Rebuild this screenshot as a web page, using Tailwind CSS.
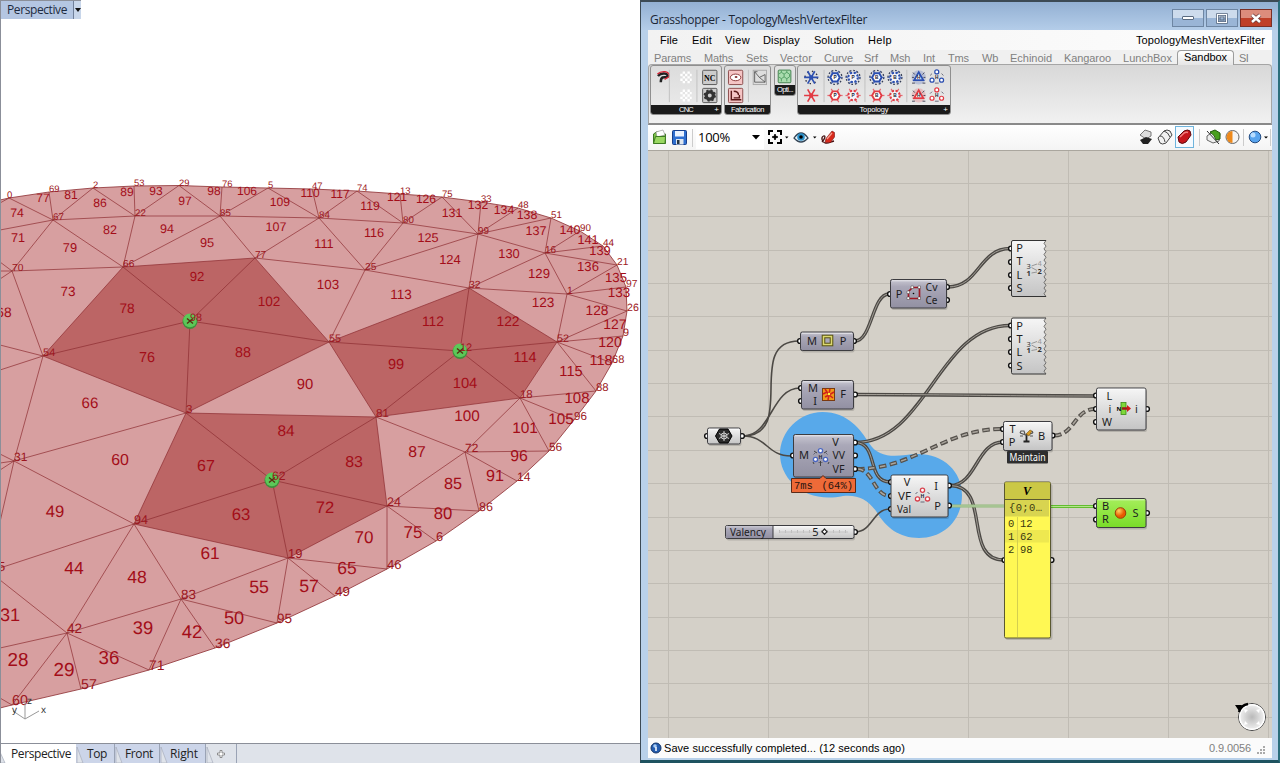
<!DOCTYPE html>
<html lang="en">
<head>
<meta charset="utf-8">
<title>Grasshopper - TopologyMeshVertexFilter</title>
<script src="https://cdn.jsdelivr.net/npm/@tailwindcss/browser@4"></script>
</head>
<body class="flex h-[763px] w-[1280px] overflow-hidden bg-white font-['Open_Sans','Noto_Sans',sans-serif] text-black">

<!-- Rhino viewport -->
<main class="relative flex h-[763px] w-[640px] shrink-0 flex-col overflow-hidden border-l border-[#8b8f99] bg-white">
  <svg id="mesh" class="absolute -left-px top-0 font-['Liberation_Sans',sans-serif]" text-rendering="geometricPrecision" width="640" height="744" viewBox="0 0 640 744"></svg>
  <div class="relative flex h-[19px] w-[80px] border-t border-[#8b8f99] bg-[#b4c6e2] text-[12px] leading-[18px] text-[#1c2a40]">
    <span class="w-[72px] pl-1.5"><span data-w="60">Perspective</span></span>
    <span class="flex w-2 items-center justify-center border-l border-[#70809a] bg-[#c8d6ea]"><svg width="6" height="4"><path d="M0 0h6L3 4z" fill="#111"/></svg></span>
  </div>
  <nav class="mt-auto flex h-[20px] border-t border-[#8b8f99] bg-[#dfe3ea] text-[12px] leading-[20px] text-[#222]">
    <span class="w-[75px] bg-white pl-[10px]"><span data-w="60">Perspective</span></span>
    <span class="w-[39px] border-r border-[#9aa3b5] bg-[#ccd5e9] pl-[11px]"><span data-w="20">Top</span></span>
    <span class="w-[45px] border-r border-[#9aa3b5] bg-[#ccd5e9] pl-[10px]"><span data-w="28">Front</span></span>
    <span class="w-[46px] border-r border-[#9aa3b5] bg-[#ccd5e9] pl-[10px]"><span data-w="28">Right</span></span>
    <span class="flex w-[31px] items-center justify-center border-r border-[#9aa3b5]"><svg width="8" height="8"><path d="M3 .5h2V3h2.500v2H5v2.500H3V5H.5V3H3z" fill="#fff" stroke="#777" stroke-width=".8"/></svg></span>
  </nav>
  <svg class="absolute -left-px top-[744px]" width="240" height="19" fill="#dfe3ea" stroke="#a8aebb" stroke-width=".7"><path d="M0 8L5 19H0zM77 3L83 19H77zM116 3L122 19H116zM161 3L167 19H161zM207 3L213 19H207z"/></svg>
</main>

<!-- Grasshopper window -->
<section class="flex h-[763px] w-[640px] shrink-0 flex-col border-2 border-b-[3px] border-l border-[#3c4a55] bg-[#b9d1ea] border-b-[#1e5360] border-r-[#2b6e7c]">
  <header class="flex h-[28px] items-start bg-linear-to-b from-[#93b0d3] to-[#b4cde9] pl-[9px]">
    <h1 class="mt-[9px] flex-1 text-[12px] leading-[17px] text-[#1b2636]"><span data-w="217">Grasshopper - TopologyMeshVertexFilter</span></h1>
    <div class="mr-[6px] mt-[7px] flex gap-[2px]">
      <span class="flex h-[18px] w-[32px] items-center justify-center border border-[#6e86a3] bg-linear-to-b from-[#cddbec] from-50% to-[#9ab5d6] to-50%"><svg width="12" height="5"><rect x=".5" y=".5" width="11" height="3" rx=".5" fill="#fff" stroke="#5b6b80"/></svg></span>
      <span class="flex h-[18px] w-[32px] items-center justify-center border border-[#6e86a3] bg-linear-to-b from-[#cddbec] from-50% to-[#9ab5d6] to-50%"><svg width="12" height="11" fill="none"><rect x="1.500" y="1.500" width="9" height="8" stroke="#5b6b80" stroke-width="2.500"/><rect x="1.500" y="1.500" width="9" height="8" stroke="#fff" stroke-width="1"/><rect x="4" y="4" width="4" height="3" stroke="#5b6b80"/></svg></span>
      <span class="flex h-[18px] w-[32px] items-center justify-center border border-[#7a2f26] bg-linear-to-b from-[#dc8c7c] from-50% to-[#bf3f28] to-50%"><svg width="12" height="11"><path d="M2 2l8 7M10 2l-8 7" stroke="#6a3a3a" stroke-width="4"/><path d="M2 2l8 7M10 2l-8 7" stroke="#fff" stroke-width="2.500"/></svg></span>
    </div>
  </header>

  <div class="ml-[7px] flex h-[728px] w-[624px] flex-col bg-[#f0f0f0] font-['Liberation_Sans',sans-serif]">
    <!-- menu -->
    <div class="flex h-[20px] bg-linear-to-r from-[#f2f2f2] to-[#fdfdfd] pl-[12px] text-[11px] leading-[21px]">
      <span class="w-[32px]"><span data-w="18">File</span></span>
      <span class="w-[33px]"><span data-w="20">Edit</span></span>
      <span class="w-[38px]"><span data-w="25">View</span></span>
      <span class="w-[51px]"><span data-w="37">Display</span></span>
      <span class="w-[54px]"><span data-w="40">Solution</span></span>
      <span><span data-w="24">Help</span></span>
      <span class="ml-auto mr-[7px]"><span data-w="129">TopologyMeshVertexFilter</span></span>
    </div>
    <!-- tabs -->
    <div class="flex h-[14px] pl-[6px] text-[11px] leading-[16px] text-[#808080]">
      <span class="w-[50px]"><span data-w="37">Params</span></span>
      <span class="w-[42px]"><span data-w="29">Maths</span></span>
      <span class="w-[34px]"><span data-w="22">Sets</span></span>
      <span class="w-[44px]"><span data-w="32">Vector</span></span>
      <span class="w-[40px]"><span data-w="29">Curve</span></span>
      <span class="w-[26px]"><span data-w="14">Srf</span></span>
      <span class="w-[33px]"><span data-w="20">Msh</span></span>
      <span class="w-[25px]"><span data-w="12">Int</span></span>
      <span class="w-[34px]"><span data-w="21">Tms</span></span>
      <span class="w-[28px]"><span data-w="16">Wb</span></span>
      <span class="w-[54px]"><span data-w="42">Echinoid</span></span>
      <span class="w-[59px]"><span data-w="47">Kangaroo</span></span>
      <span class="w-[54px]"><span data-w="49">LunchBox</span></span>
      <span class="z-10 h-[15px] w-[57px] rounded-t-[4px] border border-b-0 border-[#9c9c9c] bg-linear-to-b from-white to-[#e6e6e6] pl-[6px] leading-[13px] text-black"><span data-w="43">Sandbox</span></span>
      <span class="pl-[5px]"><span data-w="9">SI</span></span>
    </div>
    <!-- ribbon -->
    <div class="flex h-[61px] items-start gap-[3px] rounded-t-[4px] border border-b-2 border-[#a5a5a5] border-b-[#8a8a8a] bg-linear-to-b from-[#d8d8d8] to-[#f1f1f1] pl-px text-[7.500px]">
      <div class="flex h-[50px] w-[72px] flex-col overflow-hidden rounded-[3px] border border-[#8f8f8f] bg-linear-to-b from-[#dcdcdc] to-[#ececec]">
        <svg width="70" height="41" viewBox="651 65 70 41">
          <path d="M656.500 75.500q3-3.500 8-2.500 3 1.500 2 3.500l-5 .5q-2 1-2 5" fill="none" stroke="#222" stroke-width="2.600"/><path d="M656 73.500q3-3 8-2.500 5 1 4.500 5l-5 3" fill="none" stroke="#d23" stroke-width="1.400"/>
          <path d="M668.500 69v34M697.500 69v34" stroke="#c0c0c0"/>
          <g stroke="#fff" stroke-width="2.500" stroke-dasharray="2.500 2.500"><path d="M682.500 72h8M680 74.500h12M682.500 77h8M680 79.500h12M682.500 82h8M682.500 91h8M680 93.500h12M682.500 96h8M680 98.500h12M682.500 101h8"/></g>
          <g fill="#ccc" stroke="#555"><rect x="703.500" y="69.500" width="15" height="15" rx="1"/><rect x="703.500" y="88.500" width="15" height="15" rx="1"/></g>
          <text x="705" y="80.500" font-size="9" font-weight="bold" textLength="12" lengthAdjust="spacingAndGlyphs" class="font-['Liberation_Serif',serif]">NC</text>
          <circle cx="711" cy="96" r="3.800" fill="none" stroke="#333" stroke-width="3.500"/><circle cx="711" cy="96" r="5.500" fill="none" stroke="#333" stroke-width="2" stroke-dasharray="2.200 2.120"/>
        </svg>
        <div class="relative flex h-[9px] items-center justify-center bg-[#1b1b1b] text-white"><span data-w="14">CNC</span><span class="absolute right-[2px] text-[8px] leading-[8px]">+</span></div>
      </div>
      <div class="-ml-px flex h-[50px] w-[47px] flex-col overflow-hidden rounded-[3px] border border-[#8f8f8f] bg-linear-to-b from-[#dcdcdc] to-[#ececec]">
        <svg width="45" height="41" viewBox="725 65 45 41">
          <g fill="#f5c5c5" stroke="#8a4a4a"><rect x="727.500" y="69.500" width="15" height="15" rx="1"/><rect x="727.500" y="88.500" width="15" height="15" rx="1"/></g>
          <ellipse cx="735" cy="77" rx="5.500" ry="3.500" fill="#fff" stroke="#833"/><ellipse cx="735.500" cy="76.500" rx="1.500" ry="1" fill="#833"/>
          <path d="M730.500 91v9.500H741M733 98.500h6v-3M733 91.500q5 0 5 4" fill="none" stroke="#5a1717" stroke-width="1.500"/><path d="M748.500 69v34" stroke="#c0c0c0"/>
          <rect x="753.500" y="69.500" width="14" height="15" fill="#ddd" stroke="#aaa"/><path d="M755 82v-11l5 6 6-3v8zM755 71h3M760 77l6 5" fill="none" stroke="#555" stroke-width=".9"/>
        </svg>
        <div class="flex h-[9px] items-center justify-center bg-[#1b1b1b] text-white"><span data-w="33">Fabrication</span></div>
      </div>
      <div class="-mr-px flex h-[31px] w-[22px] flex-col overflow-hidden rounded-[3px] border border-[#8f8f8f] bg-[#e2e2e2]">
        <svg width="20" height="21" viewBox="775 65 20 21"><rect x="777.500" y="69.500" width="14" height="14" rx="1" fill="#a9dcae" stroke="#3c7a48"/><path d="M778 74l3-2 3 2v3l-3 2-3-2M784 74l3-2 3 2v3l-3 2-3-2M781 79v3M787 79v3M781 72v-2M787 72v-2" fill="none" stroke="#4f9a60"/></svg>
        <div class="flex h-[10px] items-center justify-center bg-[#1b1b1b] text-white"><span data-w="16">Opti...</span></div>
      </div>
      <div class="-ml-px flex h-[50px] w-[154px] flex-col overflow-hidden rounded-[3px] border border-[#8f8f8f] bg-linear-to-b from-[#dcdcdc] to-[#ececec]">
        <svg id="topo" width="152" height="41" viewBox="799 65 152 41"></svg>
        <div class="relative flex h-[9px] items-center justify-center bg-[#1b1b1b] text-white"><span data-w="29">Topology</span><span class="absolute right-[2px] text-[8px] leading-[8px]">+</span></div>
      </div>
    </div>
    <!-- canvas toolbar -->
    <div class="flex h-[25px] items-center bg-linear-to-b from-white to-[#f4f4f4]">
      <svg width="48" height="24" viewBox="648 126 48 24">
        <path d="M653.500 143.500V134l3-2h4l1 2h4v9.500z" fill="#7cc04a" stroke="#3d7a22"/><path d="M656 132l7-2 2 5-8 2z" fill="#fff" stroke="#888" stroke-width=".6"/><path d="M653.500 143.500l2-7h10l-.5 7z" fill="#9ad862" stroke="#3d7a22"/>
        <rect x="672.500" y="130.500" width="14" height="14" rx="1" fill="#2f6fd0" stroke="#173f8c"/><rect x="675" y="131" width="9" height="5.500" fill="#eaf2ff"/><rect x="676" y="139" width="7.500" height="5.500" fill="#dfe6ee"/><rect x="677" y="140" width="2.500" height="4" fill="#234"/><path d="M692.500 129v18" stroke="#ccc"/>
      </svg>
      <div class="flex h-[23px] w-[68px] items-center bg-white pl-[2px] font-['Open_Sans','Noto_Sans',sans-serif] text-[13px]"><span data-w="32">100%</span><svg class="ml-auto mr-1" width="8" height="5"><path d="M0 0h8L4 4.500z"/></svg></div>
      <svg width="76" height="24" viewBox="764 126 76 24">
        <path d="M769 135v-4h4M777 131h4v4M781 139v4h-4M773 143h-4v-4" fill="none" stroke="#000" stroke-width="2"/><path d="M775 134v6M772 137h6" stroke="#000" stroke-width="1.500"/><circle cx="775" cy="137" r="1.800"/><path d="M785 136.500h3.500l-1.750 2zM813 136.500h3.500l-1.750 2z"/>
        <path d="M794 138q7-10 14 0q-7 8-14 0z" fill="#e8f4fb" stroke="#345" stroke-width="1.300"/><circle cx="801" cy="137" r="3.800" fill="#2a8fc8"/><circle cx="801" cy="137" r="1.800"/>
        <path d="M822 142c3-3 4-7 1.500-6s-2 6 1.500 7 5-1 9-2" fill="none" stroke="#411" stroke-width="1.300"/><path d="M825 142.500l1-4 6-7.500 2.500 1.500v4.500l-4 5.500z" fill="#d8291c" stroke="#711" stroke-width=".6"/><path d="M827 139l5-6" stroke="#f5a090" stroke-width="1.300"/>
      </svg>
      <svg class="ml-auto" width="138" height="24" viewBox="1134 126 138 24">
        <path d="M1140 135l5-5 6 2v4l-5 3z" fill="#ddd" stroke="#777"/><path d="M1140 140l6-3 6 2-4 5h-5z" fill="#222"/>
        <g fill="#f2f2f2" stroke="#444"><path d="M1158 138l6-7q3-2 6 0l2 4-6 8q-4 2-6 0z"/><path d="M1160 136q4 0 5 6M1164 131q4 1 6 6" fill="none"/></g>
        <rect x="1175.500" y="126.500" width="18" height="21" fill="#f5faff" stroke="#6fb4dc"/><path d="M1178 137l6-6q4-2 6 0l1 4-5 7q-4 3-7 0z" fill="#c5161c" stroke="#5f080c"/><path d="M1180 137l4-4q2-1 4-.5" fill="none" stroke="#f08080" stroke-width="1.500"/>
        <path d="M1199.500 129v17M1243.500 129v17M1270.500 129v17" stroke="#ccc"/>
        <path d="M1207 136l7-5 6 3-1 7-6 2-6-3z" fill="#eee" stroke="#666"/><path d="M1210 132l5-2 5 3v6l-4 1q-1-5-6-8z" fill="#48a01c" stroke="#245c0c"/><path d="M1207 131l12 13" stroke="#333"/>
        <circle cx="1232.500" cy="137" r="6.500" fill="#f4f4f4" stroke="#666"/><path d="M1232.500 131a6 6 0 0 0 0 12z" fill="#ee8a1c"/>
        <circle cx="1255" cy="137" r="5.800" fill="#58a4ee" stroke="#234b80"/><circle cx="1253" cy="135" r="2.500" fill="#b8ddff"/><path d="M1264 136.500h4l-2 2z"/>
      </svg>
    </div>
    <!-- canvas -->
    <svg id="gh" class="shrink-0 border-t border-[#aaa69e] bg-[#d4d0c8] font-['Noto_Sans',sans-serif]" width="624" height="588" viewBox="648 151 624 587"></svg>
    <!-- status bar -->
    <footer class="flex h-[20px] items-center bg-[#fbfbfb] pl-[2px] text-[11px] leading-[18px]">
      <svg width="14" height="14"><circle cx="6" cy="7" r="5" fill="#245cae" stroke="#123468"/><circle cx="5" cy="5" r="1.800" fill="#a8cdf5"/><path d="M6 6v4" stroke="#fff" stroke-width="1.500"/></svg>
      <span data-w="241">Save successfully completed... (12 seconds ago)</span>
      <span class="ml-auto text-[#808080]"><span data-w="42">0.9.0056</span></span>
      <svg class="mx-[6px] mt-[5px]" width="9" height="9" fill="#aaa"><path d="M6 0h2v2H6zM3 3h2v2H3zM6 3h2v2H6zM0 6h2v2H0zM3 6h2v2H3zM6 6h2v2H6z"/></svg>
    </footer>
  </div>
</section>

<script>
/* ---------- mesh ---------- */
const V = {0:[9,198],69:[49,192],2:[93,188],53:[134,186],29:[179,185.5],76:[222,187],5:[268,188],47:[312,189],74:[357,191],13:[400,194],75:[442,197],33:[481,202],48:[518,208],51:[551,218],90:[580,231],44:[603,246],21:[617,265],97:[626,287],26:[627,311],9:[623,336],68:[612,363],88:[596,391],96:[574,420],56:[549,451],14:[517,481],86:[479,511],6:[436,541],46:[387,569],49:[335,596],95:[277,623],36:[215,648],71:[149,670],57:[81,689],60:[12,705],
67:[53,220],22:[135,216],85:[220,216],84:[319,218],80:[403,223],99:[478,234],16:[545,253],1:[567,294],52:[557,342],18:[520,398],72:[465,452],24:[387,506],19:[288,558],83:[181,599],42:[67,633],70:[12,271],66:[123,267],77:[255,258],25:[365,270],32:[469,288],54:[43,356],98:[190,321],55:[329,342],12:[460,351],3:[186,413],81:[376,417],62:[272,480],94:[134,524],31:[14,461]};
const ring=[0,69,2,53,29,76,5,47,74,13,75,33,48,51,90,44,21,97,26,9,68,88,96,56,14,86,6,46,49,95,36,71,57,60];
const pt=k=>V[k].join(',');
const outline='0,200 '+ring.map(pt).join(' ')+' 0,708';
const edges='0-67 69-67 2-67 2-22 53-22 29-22 29-85 76-85 5-85 5-84 47-84 74-84 74-80 13-80 75-80 75-99 33-99 48-99 51-99 51-16 90-16 44-16 21-16 21-1 97-1 26-1 26-52 9-52 68-52 88-52 88-18 96-18 56-18 56-72 14-72 86-72 86-24 6-24 46-24 46-19 49-19 95-19 95-83 36-83 71-83 71-42 57-42 60-42 67-22 22-85 85-84 84-80 80-99 99-16 16-1 1-52 52-18 18-72 72-24 24-19 19-83 83-42 67-70 67-66 22-66 85-66 85-77 84-77 84-25 80-25 99-25 99-32 16-32 32-1 32-52 25-32 66-77 77-25 70-66 70-54 66-54 66-98 77-98 55-98 54-98 3-98 77-55 54-3 3-55 25-55 55-32 55-12 32-12 52-12 18-12 81-12 55-81 81-18 81-72 81-24 3-81 3-62 81-62 24-62 19-62 94-62 3-94 94-19 94-83 94-42 94-31 31-3 31-54'.split(' ').map(e=>{const[a,b]=e.split('-');return`M${pt(a)}L${pt(b)}`}).join('');
const open=[[0,0,203],[67,0,230],[70,0,262],[70,0,271],[70,0,279],[54,0,345],[54,0,370],[31,0,454],[31,0,463],[31,0,470],[31,0,522],[94,0,568],[42,0,580],[42,0,648],[60,0,698]].map(([k,x,y])=>`M${pt(k)}L${x},${y}`).join('');
const F='74,17,213 77,43,198 81,71,195 86,100,203 89,127,192 93,156,191 97,185,201 98,214,191 106,247,191 109,280,202 110,310,193 117,340,194 119,370,206 121,397,197 126,426,199 131,452,213 132,478,205 134,504,210 138,527,215 137,536,230 140,570,229 141,588,239 139,600,250 136,588,266 135,616,277 133,619,292 128,597,310 127,615,324 120,610,342 118,601,360 115,571,371 108,577,398 105,561,418 101,525,427 96,519,455 91,495,475 85,453,483 80,443,513 75,413,532 70,364,537 65,347,568 57,309,586 55,259,587 50,234,617 42,192,631 39,143,627 36,109,657 29,64,669 28,18,659 71,18,237 79,70,247 82,110,229 94,167,228 95,207,242 107,276,226 111,324,243 116,374,232 125,428,237 124,450,259 130,509,253 129,539,273 123,543,302 103,328,284 113,401,294 73,68,291 92,197,276 102,269,301 78,127,308 76,147,357 88,243,352 90,305,384 68,4,312 66,90,403 112,433,321 122,508,321 99,396,364 114,525,357 104,465,383 100,467,416 87,417,451 84,286,430 83,354,461 67,206,465 63,241,514 72,325,507 60,120,459 49,55,511 61,210,553 44,74,568 48,137,577 31,10,614'.split(' ').map(s=>s.split(',').map(Number));
let m=`<polygon points="${outline}" fill="#d79fa0"/><g fill="#bc6565">${[[66,77,55,3,54],[55,32,52,18,81],[3,81,24,19,94]].map(p=>`<polygon points="${p.map(pt).join(' ')}"/>`).join('')}</g>
<path d="${edges}${open}" fill="none" stroke="#8c2c30" stroke-width=".7"/><polyline points="${outline}" fill="none" stroke="#8c2c30" stroke-width=".8"/>`;
for(const k of [98,12,62]){const[x,y]=V[k];m+=`<circle cx="${x}" cy="${y+.5}" r="7.500" fill="#3f8f3c"/><circle cx="${x}" cy="${y-.6}" r="6.800" fill="#5cc858"/><path d="M${x-3} ${y-2.500}l6 5M${x+3} ${y-2.500}l-6 5" stroke="#553010" stroke-width="1.400"/>`}
m+='<g fill="#a30d18">';
for(const[n,x,y]of F){const s=12+(y-190)*.0145;m+=`<text x="${x}" y="${y+s*.36}" font-size="${s}" text-anchor="middle">${n}</text>`}
m+='</g><g fill="#9c1620">';
for(const k in V){const[x,y]=V[k];m+=`<text x="${k==0?x-2:x}" y="${y}" font-size="${9.4+(y-185)*.0095}">${k}</text>`}
m+=`<text x="-2" y="571" font-size="13">5</text></g><path d="M25 702v17l-12-8M25 719l14-8" fill="none" stroke="#999"/><g font-size="10" fill="#333"><text x="41" y="713">x</text><text x="12" y="713">y</text><text x="27" y="704">z</text></g>`;
document.getElementById('mesh').innerHTML=m;

/* ---------- topology icons ---------- */
function star(x,y,c,letter,kind){
  let s='';
  const P=(r,a)=>[x+r*Math.cos(a*Math.PI/180),y+r*Math.sin(a*Math.PI/180)];
  const red=c==='#e23b44';
  if(kind==='tri'){const p=[-90,30,150].map(a=>P(5.5,a).join(',')).join(' ');
    s+=`<circle cx="${x}" cy="${y}" r="7.500" fill="${c}" opacity=".22"/><polygon points="${p}" fill="#fff" stroke="${c}" stroke-width="1.900"/><path d="M${x-7} ${y+6}h3M${x+4} ${y+6}h3M${x-6} ${y-5}l2 2M${x+6} ${y-5}l-2 2M${x-7} ${y}h2M${x+7} ${y}h-2" stroke="#445"/>`}
  else if(kind==='tri3'){for(const a of[-90,30,150]){const[q,w]=P(5.8,a);s+=`<circle cx="${q}" cy="${w}" r="2.100" fill="#fff" stroke="${c}" stroke-width="1.300"/>`}s+=`<path d="M${x-7} ${y-2}l2-2M${x+7} ${y-2}l-2-2M${x-2} ${y+6}h4" stroke="#667"/>`}
  else if(kind==='ast'){if(!red)s+=`<circle cx="${x}" cy="${y}" r="6.500" fill="none" stroke="#334" stroke-width="1.500" stroke-dasharray="1.500 3.600"/>`;for(let a=0;a<180;a+=60){const[q,w]=P(7.5,a),[e,r]=P(7.5,a+180);s+=`<path d="M${q} ${w}L${e} ${r}" stroke="${c}" stroke-width="1.700"/>`}s+=`<circle cx="${x}" cy="${y}" r="2.300" fill="${c}"/>`}
  else{for(let a=0;a<360;a+=60){const[q,w]=P(4.5,a),[e,r]=P(8,a);s+=`<path d="M${q} ${w}L${e} ${r}" stroke="${c}" stroke-width="1.300" opacity=".7"/>`}
    if(!red)s+=`<circle cx="${x}" cy="${y}" r="7.300" fill="none" stroke="#333c55" stroke-width="1.300" stroke-dasharray="1.800 2.020"/>`;
    s+=kind==='hex'?`<polygon points="${[0,60,120,180,240,300].map(a=>P(5,a).join(',')).join(' ')}" fill="#fff" stroke="${c}" stroke-width="2"/>`:`<circle cx="${x}" cy="${y}" r="5" fill="#f4f4fa" stroke="${c}" stroke-width="2.200" stroke-dasharray="2.300 1.630"/>`}
  if(letter)s+=`<text x="${x}" y="${y+2}" font-size="5" font-weight="bold" text-anchor="middle" fill="#223">${letter}</text>`;
  return s}
const B='#2c4fb0',R='#e23b44';let t='<path d="M822.500 69v34M865.500 69v34M909.500 69v34" stroke="#c0c0c0"/>';
[[77,B],[96,R]].forEach(([y,c])=>{t+=star(809,y,c,'','ast')+star(834,y,c,'P','hex')+star(853,y,c,'P','dot')+star(878,y,c,'B','hex')+star(897,y,c,'B','dot')+star(922,y,c,'H','tri')+star(941,y,c,'H','tri3')});
document.getElementById('topo').innerHTML=t;

/* ---------- definition canvas ---------- */
let g='<defs><linearGradient id="a" x2="0" y2="1"><stop offset="0" stop-color="#c9c8d2"/><stop offset=".25" stop-color="#aaa8b8"/><stop offset="1" stop-color="#9290a2"/></linearGradient><linearGradient id="b" x2="0" y2="1"><stop offset="0" stop-color="#f6f6f6"/><stop offset="1" stop-color="#c4c4c4"/></linearGradient><linearGradient id="c" x2="0" y2="1"><stop offset="0" stop-color="#a6ee5c"/><stop offset="1" stop-color="#79dc28"/></linearGradient><radialGradient id="r"><stop offset="0" stop-color="#b9b9b9"/><stop offset="1" stop-color="#f4f4f4"/></radialGradient><radialGradient id="o" cx=".35" cy=".3"><stop offset="0" stop-color="#ffd060"/><stop offset="1" stop-color="#e85a00"/></radialGradient></defs><g stroke="#c0bcb4" stroke-width="1">';
for(let x=668.5;x<1272;x+=100)g+=`<path d="M${x} 150V738"/>`;
for(let y=183.500;y<738;y+=33.35)g+=`<path d="M648 ${Math.floor(y)+.5}H1272"/>`;
g+='</g><path d="M822.500 412C848 412 861 430 869 443C877 456 890 457 906 455C938 449 962 468 962 495C962 520 944 538 919 538C899 538 886 527 878 514C869 500 858 494 843 496C806 504 780 480 780 454C780 432 799 412 822.500 412z" fill="#58a9ea"/>';
const wire=(x,y,u,v,k,h)=>{h=h||(u-x)*.5;const d=`M${x} ${y}C${x+h} ${y} ${u-h} ${v} ${u} ${v}`;
  if(k==='s')return`<path d="${d}" fill="none" stroke="#4c4945" stroke-width="1.600"/>`;
  if(k==='d')return`<path d="${d}" fill="none" stroke="#4c4945" stroke-width="3.400"/><path d="${d}" fill="none" stroke="#aca79f" stroke-width=".9"/>`;
  return`<path d="${d}" fill="none" stroke="#55514c" stroke-width="4" stroke-dasharray="7.500 3.500"/><path d="${d}" fill="none" stroke="#aaa59d" stroke-width="1.500" stroke-dasharray="5.500 5.500" stroke-dashoffset="-1"/>`};
g+=wire(743,436,799,341,'s',55)+wire(743,436,800,388,'s')+wire(743,436,791,456,'s')
 +wire(855,341,889,294,'d')+wire(948,287,1010,248.500,'d')+wire(855,442.500,1010,325.500,'d',72)+wire(855,394.500,1095,396,'d')+wire(855,442.500,890,482,'d',24)+wire(950,485.500,1003,442,'d')+wire(950,485.500,1004,560,'d',42)
 +wire(857,469,1002,429,'x',58)+wire(857,469,890,496,'x')+wire(1054,435.500,1095,409,'x')+wire(855,532,890,509,'s')
 +'<path d="M950 506H1004" stroke="#8fb878" stroke-width="3"/><path d="M950 506H1004" stroke="#bcd0ac"/><path d="M1051 506.500H1096" stroke="#62bc30" stroke-width="3"/><path d="M1051 506.500H1096" stroke="#b4e48c"/>';
const port=(x,y)=>`<circle cx="${x}" cy="${y}" r="2.400" fill="#fff" stroke="#111" stroke-width="1.400"/>`;
const box=(x,y,w,h,f)=>`<rect x="${x+1}" y="${y+2}" width="${w}" height="${h}" rx="2" fill="#000" opacity=".15"/><rect x="${x}" y="${y}" width="${w}" height="${h}" rx="1.800" fill="url(#${f})" stroke="#3c3c40"/><path d="M${x+1.500} ${y+1.300}h${w-3}" stroke="#fff" opacity=".6"/>`;
const T=(s,x,y,w)=>`<text x="${x}" y="${y+4}" font-size="11" fill="#1d1d22" ${w?`textLength="${w}" lengthAdjust="spacingAndGlyphs"`:'text-anchor="middle"'}>${s}</text>`;
const MONO='font-family="Liberation Mono, monospace"';
// ports sit behind the boxes
g+=[[707,436],[742,436],[800,341],[854,341],[890,294],[947,287],[947,300],[1011,248.500],[1011,262],[1011,275],[1011,288],[1011,325.500],[1011,339],[1011,352],[1011,365.500],[801,388],[801,401],[855,394.500],[793,455.500],[855,442.500],[855,455.500],[855,469],[891,482],[891,496],[891,509],[949,485.500],[949,505.500],[855,532],[1003,429],[1003,442],[1052.500,435.500],[1096,395.500],[1096,409],[1096,422],[1147,409],[1096,506],[1096,519.500],[1147,513],[1004.500,560],[1051.500,560]].map(p=>port(...p)).join('');
g+=box(707.500,428,33,16,'b')+'<polygon points="715.500,436 719.500,429 728,429 732,436 728,443 719.500,443" fill="#2a2a2a" stroke="#000"/><path d="M724 431v10M719 433.500l10 5M719 438.500l10-5" stroke="#ccc"/><circle cx="724" cy="436" r="3" fill="none" stroke="#ccc"/>';
g+=box(800.500,332,53,18.500,'a')+T('M',807,341,10)+T('P',843,341)+'<rect x="823.500" y="336.500" width="8" height="8" fill="#aaa8b8" stroke="#5a5416" stroke-width="3.600"/><rect x="823.500" y="336.500" width="8" height="8" fill="none" stroke="#dcd870" stroke-width="1.500"/>';
g+=box(890.500,279.500,56,28.500,'a')+T('P',899,293.500)+T('Cv',925.500,287,12)+T('Ce',925.500,300,12)+'<path d="M908.500 298.500v-7l4-4h7v11z" fill="none" stroke="#a01824" stroke-width="1.700"/><g fill="#fff" stroke="#444" stroke-width=".5"><path d="M907 297h2.500v2.500H907zM918 297h2.500v2.500H918zM918 286h2.500v2.500H918zM911 286h2.500v2.500H911zM907 291h2.500v2.500H907z"/></g><circle cx="913.500" cy="293.500" r=".8"/>';
for(const y of[240,317.500]){let z='';for(let i=0;i<10;i++)z+='l-2 2.800l2 2.800';
 g+=`<path d="M1013 ${y+.5}H1046${z}H1013q-1.500 0-1.500-1.500V${y+2}q0-1.500 1.500-1.500z" fill="url(#b)"/><path d="M1046 ${y+.5}${z}" fill="none" stroke="#555" stroke-width=".8"/><path d="M1046 ${y+56.500}H1013q-1.500 0-1.500-1.500V${y+2}q0-1.500 1.500-1.500H1046" fill="none" stroke="#333"/>`+['P','T','L','S'].map((c,i)=>T(c,1019.500,y+8+13.400*i)).join('')
 +`<g font-size="7.500" font-weight="bold" fill="#333"><text x="1026.500" y="${y+29}" font-weight="400">3</text><text x="1037.500" y="${y+26}" fill="#999" font-weight="400">4</text><text x="1026.500" y="${y+35.500}">1</text><text x="1037.500" y="${y+34}">2</text></g><path d="M1031.500 ${y+26}l5.500-2M1031.500 ${y+33}l5.500-1M1031.500 ${y+27.500}l5.500 3" stroke="#777" stroke-width=".7"/>`}
g+=box(801.500,380.500,52,28.500,'a')+T('M',808,388,10)+T('I',815,401)+T('F',843,394)+'<rect x="822.500" y="388.500" width="12" height="12" fill="#f09a18" stroke="#7a3a10"/><path d="M823 394l4-2 2 3 5-3M827 392l-2-3M829 395l-1 5M825 397l4-2 4 3M830 389l-1 5" fill="none" stroke="#d3201c" stroke-width="1.500"/><circle cx="829" cy="394" r="1.200" fill="#ff4"/>';
g+=box(793.500,434.500,60,42.500,'a')+T('M',799,455,10)+T('V',835.500,442)+T('VV',832.500,455,12.500)+T('VF',832.500,468.500,12)+star(820.500,456.500,'#4a66c0','H','tri3')+'<path d="M814 451l3 2M827 451l-3 2M820.500 461v5M814 464l-1-2M828 464l1-2" stroke="#444"/>';
g+='<path d="M791.500 478.500H820l3-3 3 3H855.500V492.500H791.500z" fill="#ee6a38" stroke="#5a2a18"/><text x="794" y="489" font-size="10.500" fill="#2a1410" '+MONO+'><tspan>7ms</tspan><tspan x="821.500">(64%)</tspan></text>';
g+=box(891,475,57,42,'b')+T('V',907,482)+T('VF',898,495.500,13)+T('Val',897,508.500,14)+T('I',936,485.500)+T('P',937.500,505.500)+star(922.500,496,'#d8404c','H','tri3');
g+=box(725.500,525.500,128.500,13,'b')+'<rect x="726" y="526" width="47" height="12" fill="url(#a)"/><path d="M773 525.500v13" stroke="#3c3c40"/>'+T('Valency',730,531.500,36)+'<path d="M779 531.500H848" stroke="#bbb" stroke-dasharray="1 5" stroke-width="3"/><path d="M779 532H848" stroke="#c4c4c4"/>'+T('5',815.500,531.500)+'<path d="M824.500 529l2.500 2.700-2.500 2.700-2.500-2.700z" fill="#fff" stroke="#222" stroke-width="1.200"/>';
g+=box(1003.500,421.500,48.500,29,'b')+T('T',1012.500,429)+T('P',1012,442)+T('B',1041.500,435.500)+'<path d="M1026.500 434v7M1023.500 441.500h6" stroke="#222" stroke-width="1.800"/><path d="M1020 433l6 2 7-2M1020 433l1-2h3l1 3M1033 433l-1-2M1020 436h3M1030 436h3" stroke="#555" stroke-width="1.200" fill="none"/><path d="M1026 434l4-4 2 1-3 5z" fill="#d89a20" stroke="#5a4010" stroke-width=".5"/>';
g+='<rect x="1007" y="451" width="41" height="12.500" rx="1" fill="#2e2e2e"/><text x="1009.500" y="461" font-size="10" fill="#fff" textLength="36" lengthAdjust="spacingAndGlyphs">Maintain</text>';
g+=box(1096.500,388,49.500,42,'b')+T('L',1109.500,395.500)+T('i',1110,408.500)+T('W',1102,422,10)+T('i',1136.500,408.500)+'<rect x="1121" y="402.500" width="5" height="12" fill="#7ed83a" stroke="#3c8a18" stroke-width=".8"/><path d="M1122 408.500h6" stroke="#a01818" stroke-width="2.500"/><path d="M1127 405l4 3.500-4 3.500z" fill="#d01818"/><text x="1116.500" y="411" font-size="6" font-weight="bold">N</text>';
g+=box(1096.500,498.500,49.500,29,'c')+T('B',1105.500,506)+T('R',1105.500,519)+T('S',1135.500,512.500)+'<circle cx="1120.500" cy="513" r="5.300" fill="url(#o)" stroke="#9a4008"/>';
g+='<rect x="1005.500" y="484" width="47" height="156" rx="2" opacity=".15"/><rect x="1004.500" y="482" width="46" height="156" rx="1.500" fill="#fff854" stroke="#5a5830"/><rect x="1005" y="482.500" width="45" height="17" fill="#cbc846"/><rect x="1005" y="500" width="44" height="16.500" fill="#d8d450"/><path d="M1005 499.500h45" stroke="#5a5830" stroke-width="1.200"/><rect x="1005" y="530" width="44" height="12.500" fill="#eee850"/><path d="M1017.500 517v120" stroke="#d4cf50"/><text x="1023" y="494.500" font-size="12" font-weight="bold" font-style="italic" font-family="Liberation Serif, serif">V</text><g font-size="10.500" fill="#3a3910" '+MONO+'><text x="1009" y="511" textLength="33">{0;0…</text><text x="1008" y="526.500">0</text><text x="1020" y="526.500">12</text><text x="1008" y="540">1</text><text x="1020" y="540">62</text><text x="1008" y="553">2</text><text x="1020" y="553">98</text></g>';
g+='<circle cx="1252" cy="717" r="13.500" fill="url(#r)" stroke="#444"/><circle cx="1252" cy="717" r="12.300" fill="none" stroke="#fff" stroke-width="1.500"/><path d="M1244 709l4 1-3 3zM1260 709l-4 1 3 3zM1244 725l4-1-3-3zM1260 725l-4-1 3-3z" fill="#fff"/><path d="M1239 712q2-7 9-8" fill="none" stroke="#000" stroke-width="2.500"/><path d="M1235 705l7 0-3 6z"/>';
document.getElementById('gh').innerHTML=g;

/* spread each label's letters to its design width, once the styles are in */
function fit(){document.querySelectorAll('[data-w]').forEach(e=>{e.style.whiteSpace='nowrap';e.style.letterSpacing='0px';const r=document.createRange();r.selectNodeContents(e);const w=r.getBoundingClientRect().width,n=e.textContent.length;e.style.letterSpacing=((+e.dataset.w-w)/n)+'px'})}
addEventListener('load',()=>{fit();requestAnimationFrame(fit);document.fonts.ready.then(fit);setTimeout(fit,60)});
</script>
</body>
</html>
